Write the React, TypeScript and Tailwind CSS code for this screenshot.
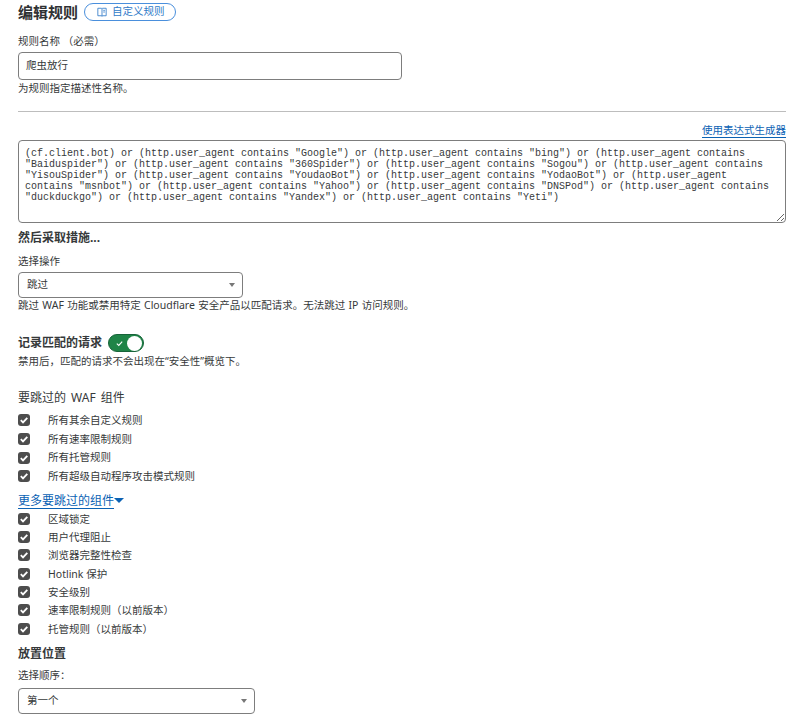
import React from 'react';

const EXPRESSION =
  '(cf.client.bot) or (http.user_agent contains "Google") or (http.user_agent contains "bing") or (http.user_agent contains "Baiduspider") or (http.user_agent contains "360Spider") or (http.user_agent contains "Sogou") or (http.user_agent contains "YisouSpider") or (http.user_agent contains "YoudaoBot") or (http.user_agent contains "YodaoBot") or (http.user_agent contains "msnbot") or (http.user_agent contains "Yahoo") or (http.user_agent contains "DNSPod") or (http.user_agent contains "duckduckgo") or (http.user_agent contains "Yandex") or (http.user_agent contains "Yeti")';

const WAF_ITEMS = ['所有其余自定义规则', '所有速率限制规则', '所有托管规则', '所有超级自动程序攻击模式规则'];
const MORE_ITEMS = ['区域锁定', '用户代理阻止', '浏览器完整性检查', 'Hotlink 保护', '安全级别', '速率限制规则（以前版本）', '托管规则（以前版本）'];

const Check: React.FC<{ label: string; rowClass: string }> = ({ label, rowClass }) => (
  <div className={`flex items-center ${rowClass}`}>
    <span className="w-3 h-3 rounded-[3px] bg-[#4d4d4d] flex items-center justify-center flex-shrink-0">
      <svg viewBox="0 0 12 12" className="w-3 h-3" fill="none" stroke="#fff" strokeWidth="1.8">
        <path d="M2.8 6.2 5 8.4 9.3 3.8" />
      </svg>
    </span>
    <span className="ml-[18px] text-[10.5px] leading-none text-[#36393a]">{label}</span>
  </div>
);

const Select: React.FC<{ value: string; width: string }> = ({ value, width }) => (
  <div className={`${width} h-[26px] flex items-center justify-between pl-2 pr-[7px] bg-white border border-[#7d7d7d] rounded-[4px]`}>
    <span className="text-[10.5px] text-[#36393a]">{value}</span>
    <span className="w-0 h-0 border-x-[3.5px] border-x-transparent border-t-[4px] border-t-[#777]" />
  </div>
);

export default function App() {
  return (
    <div className="w-[808px] h-[719px] overflow-hidden bg-white pl-[18px] pr-[22px] pt-[3px] text-[#36393a] font-['Noto_Sans','Noto_Sans_CJK_SC',sans-serif]">
      <div className="flex items-center h-[18px]">
        <h1 className="text-[15px] font-bold leading-none text-[#2f3133]">编辑规则</h1>
        <span className="ml-[6px] w-[92px] h-[18px] flex items-center pl-[12px] gap-[5px] border border-[#4a8fdc] rounded-full text-[10.5px] text-[#2f7ac8]">
          <svg viewBox="0 0 12 12" className="w-[10px] h-[10px]" fill="none" stroke="#2f7ac8" strokeWidth="1">
            <path d="M1 1.5h4.2L6 2.2v9L5.2 10.5H1z" />
            <path d="M6 2.2l.8-.7H11v9H6.8l-.8.7" />
            <path d="M7.5 4h2M7.5 6h2" />
          </svg>
          自定义规则
        </span>
      </div>

      <div className="mt-[12px] h-[16px] text-[10.5px] leading-[16px]">规则名称 （必需）</div>
      <div className="mt-[3px] w-[384px] h-[28px] flex items-center px-[7px] border border-[#7d7d7d] rounded-[4px] text-[10.5px]">爬虫放行</div>
      <div className="mt-[1px] h-[14px] text-[10.5px] leading-[14px]">为规则指定描述性名称。</div>

      <div className="mt-[16px] h-px bg-[#bdbdbd]" />

      <div className="mt-[11px] h-[17px] flex justify-end">
        <a className="text-[10.5px] leading-[15px] h-[15px] text-[#0b62b4] border-b border-[#0b62b4]">使用表达式生成器</a>
      </div>
      <textarea
        readOnly
        spellCheck={false}
        defaultValue={EXPRESSION}
        className="block w-full h-[83px] pl-[6px] pr-[12px] pt-[7px] border border-[#7d7d7d] rounded-[4px] font-['Liberation_Mono',monospace] text-[10px] leading-[11px] text-[#36393a] outline-none resize-y"
      />

      <h2 className="mt-[7px] h-[16px] text-[12px] font-bold leading-[16px]">然后采取措施...</h2>
      <div className="mt-[7px] h-[16px] text-[10.5px] leading-[16px]">选择操作</div>
      <div className="mt-[3px]"><Select value="跳过" width="w-[225px]" /></div>
      <div className="h-[14px] text-[10.5px] leading-[14px] [word-spacing:0.6px]">跳过 WAF 功能或禁用特定 Cloudflare 安全产品以匹配请求。无法跳过 IP 访问规则。</div>

      <div className="mt-[22px] flex items-center h-[18px]">
        <span className="text-[12px] font-bold leading-none">记录匹配的请求</span>
        <span className="ml-[6px] w-[36px] h-[18px] flex items-center justify-between pl-[6px] pr-[1px] rounded-full bg-[#1f8447] border border-[#17643a]">
          <svg viewBox="0 0 10 10" className="w-[9px] h-[9px]" fill="none" stroke="#fff" strokeWidth="1.2">
            <path d="M2 5.2 4.2 7.2 8 3" />
          </svg>
          <span className="w-[15px] h-[15px] rounded-full bg-white" />
        </span>
      </div>
      <div className="mt-[2px] h-[14px] text-[10.5px] leading-[14px]">禁用后，匹配的请求不会出现在“安全性”概览下。</div>

      <div className="mt-[22px] h-[16px] text-[12px] leading-[16px] [word-spacing:2px]">要跳过的 WAF 组件</div>
      <div className="mt-[5px]">
        {WAF_ITEMS.map(item => <Check key={item} label={item} rowClass="h-[18.67px]" />)}
      </div>
      <div className="mt-[6px] h-[18px] flex items-center">
        <a className="text-[12px] leading-[15px] h-[16px] text-[#0b62b4] border-b border-[#0b62b4]">更多要跳过的组件</a>
        <span className="w-0 h-0 border-x-[5px] border-x-transparent border-t-[5px] border-t-[#0b62b4]" />
      </div>
      <div>
        {MORE_ITEMS.map(item => <Check key={item} label={item} rowClass="h-[18.33px]" />)}
      </div>

      <h2 className="mt-[8px] h-[16px] text-[12px] font-bold leading-[16px]">放置位置</h2>
      <div className="mt-[5px] h-[16px] text-[10.5px] leading-[16px]">选择顺序：</div>
      <div className="mt-[5px]"><Select value="第一个" width="w-[237px]" /></div>
    </div>
  );
}
